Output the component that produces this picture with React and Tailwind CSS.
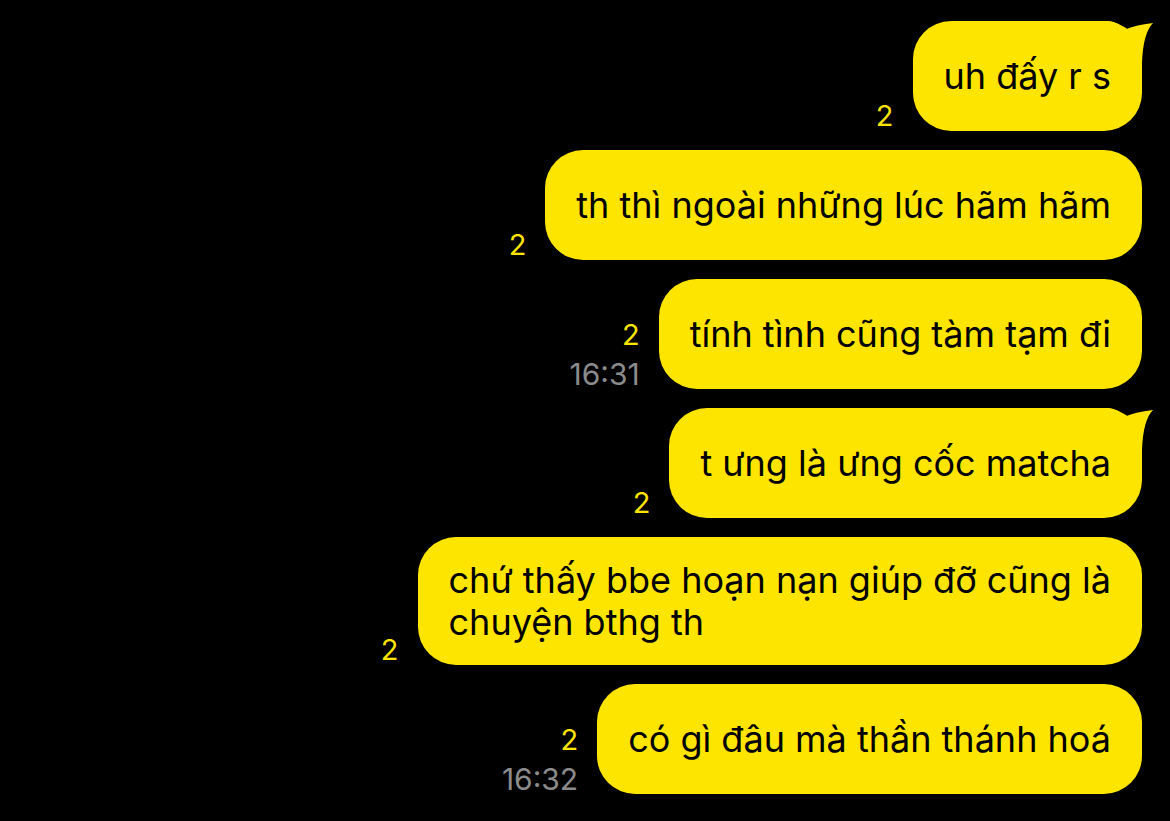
import React from 'react';

const YELLOW = '#fee500';

const messages = [
  { text: 'uh đấy r s', tail: true },
  { text: 'th thì ngoài những lúc hãm hãm' },
  { text: 'tính tình cũng tàm tạm đi', time: '16:31' },
  { text: 't ưng là ưng cốc matcha', tail: true },
  { text: ['chứ thấy bbe hoạn nạn giúp đỡ cũng là', 'chuyện bthg th'] },
  { text: 'có gì đâu mà thần thánh hoá', time: '16:32' },
];

function Tail() {
  return (
    <svg
      className="absolute top-0 right-[-12px]"
      width="57"
      height="42"
      viewBox="0 0 57 42"
    >
      <path
        d="M0 0 L12 0 Q22 1 27 9 Q38 4 56 2 Q46 12 45 42 L0 42 Z"
        fill={YELLOW}
      />
    </svg>
  );
}

function Bubble({ msg }) {
  const lines = Array.isArray(msg.text) ? msg.text : [msg.text];
  return (
    <div className="flex justify-end items-end gap-[19px]">
      <div className="flex flex-col items-end font-['Inter',sans-serif]">
        <span className="text-[29px] leading-[30px] text-[#fee500]">2</span>
        {msg.time && (
          <span className="mt-[9px] text-[30px] leading-[30px] text-[#8b8b8b]">{msg.time}</span>
        )}
      </div>
      <div className="relative">
        {msg.tail && <Tail />}
        <div className="relative min-h-[110px] flex items-center px-[31px] py-[22px] rounded-[38px] bg-[#fee500] text-black text-[36px] leading-[42px] font-['Inter',sans-serif]">
          <div>
            {lines.map((l, i) => (
              <div key={i}>{l}</div>
            ))}
          </div>
        </div>
      </div>
    </div>
  );
}

export default function App() {
  return (
    <div className="w-[1170px] h-[821px] bg-black overflow-hidden pt-[21px] pr-[28px] flex flex-col gap-[19px]">
      {messages.map((m, i) => (
        <Bubble key={i} msg={m} />
      ))}
    </div>
  );
}
